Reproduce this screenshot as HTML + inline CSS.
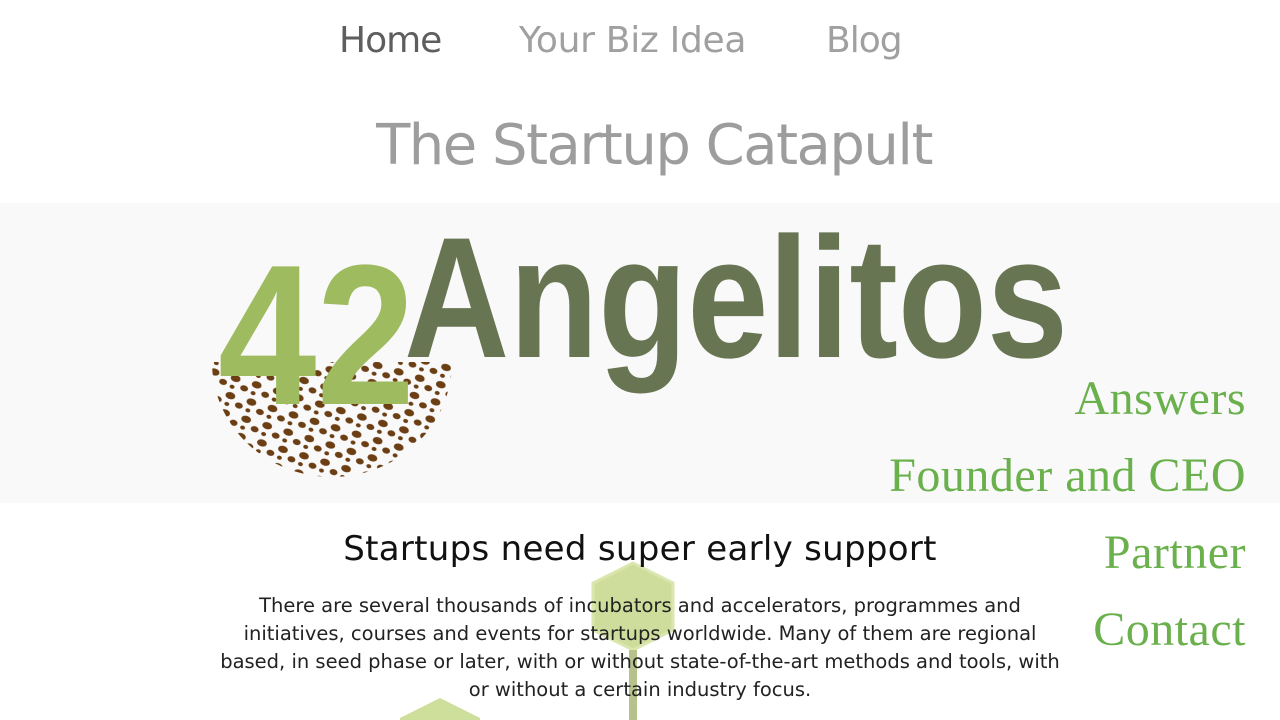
<!DOCTYPE html>
<html><head><meta charset="utf-8"><style>
html,body{margin:0;width:1280px;height:720px;overflow:hidden}
body{background:#fff;font-family:"DejaVu Sans","Liberation Sans",sans-serif;position:relative}
.nav{position:absolute;top:20px;font-size:36px;color:#a0a0a0;letter-spacing:-1px}
.band{position:absolute;left:0;top:203px;width:1280px;height:300px;background:#f9f9f9}
.r{position:absolute;right:34px;font-family:"Liberation Serif",serif;color:#6ab04c;font-size:48px;letter-spacing:0.5px;line-height:56px}
</style></head><body>
<div class="nav" style="left:339px;color:#5e5e5e">Home</div>
<div class="nav" style="left:519px;letter-spacing:-0.3px">Your Biz Idea</div>
<div class="nav" style="left:826px">Blog</div>
<div style="position:absolute;left:0;width:1308px;top:113px;text-align:center;font-size:56px;color:#9d9d9d;letter-spacing:-1.5px">The Startup Catapult</div>
<div class="band"></div>
<svg style="position:absolute;left:0;top:0;overflow:hidden" width="1280" height="720">
<defs>
<pattern id="p" width="22" height="18" patternUnits="userSpaceOnUse" patternTransform="rotate(17)">
<ellipse cx="6" cy="5" rx="5" ry="3.5" fill="#6b3e14"/>
<ellipse cx="17" cy="12" rx="4" ry="3" fill="#6b3e14"/>
<ellipse cx="5" cy="14" rx="2.5" ry="2" fill="#6b3e14"/>
</pattern>
<clipPath id="c"><path d="M212 362 L452 362 A120 115 0 0 1 212 362Z"/></clipPath>
</defs>
<rect x="200" y="355" width="260" height="130" fill="url(#p)" clip-path="url(#c)"/>
<text x="218" y="404" font-family="Liberation Sans" font-weight="bold" font-size="200" fill="#9fbb5f" textLength="197" lengthAdjust="spacingAndGlyphs">42</text>
<text x="404" y="357" font-family="Liberation Sans" font-weight="bold" font-size="172" fill="#687553" textLength="664" lengthAdjust="spacingAndGlyphs">Angelitos</text>
<polygon points="633,563 673,583 673,630 633,650 593,630 593,583" fill="#c6d88a" stroke="#d4e2a0" stroke-width="3" opacity=".85"/>
<rect x="629" y="650" width="8" height="70" fill="#b5c28c"/>
<polygon points="440,698 480,718 480,720 400,720 400,718" fill="#c6d88a" opacity=".85"/>
</svg>
<div class="r" style="top:371px">Answers</div>
<div class="r" style="top:448px">Founder and CEO</div>
<div class="r" style="top:525px">Partner</div>
<div class="r" style="top:602px">Contact</div>
<div style="position:absolute;left:0;width:1280px;top:529px;text-align:center;font-size:34px;color:#111;letter-spacing:0.3px">Startups need super early support</div>
<div style="position:absolute;left:212px;width:856px;top:592px;text-align:center;font-size:19.5px;line-height:28px;color:#222">There are several thousands of incubators and accelerators, programmes and initiatives, courses and events for startups worldwide. Many of them are regional based, in seed phase or later, with or without state-of-the-art methods and tools, with or without a certain industry focus.</div>
</body></html>
